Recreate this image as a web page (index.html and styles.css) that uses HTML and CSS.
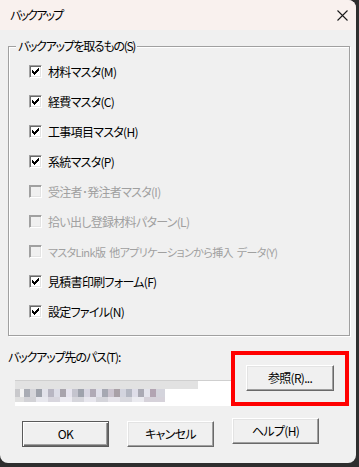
FILE: index.html
```html
<!DOCTYPE html>
<html lang="ja">
<head>
<meta charset="utf-8">
<title>バックアップ</title>
<link rel="stylesheet" href="styles.css">
</head>
<body>
<div class="window">
  <div class="titlebar">
    <span class="title">バックアップ</span>
    <span class="close">
      <svg width="11" height="11" viewBox="0 0 11 11"><path d="M0.5 0.5L10.5 10.5M10.5 0.5L0.5 10.5" stroke="#1a1a1a" stroke-width="1.1" fill="none"/></svg>
    </span>
  </div>
  <div class="content">
    <div class="group">
      <span class="legend">バックアップを取るもの(S)</span>
      <div class="rows">
        <div class="row"><span class="cb checked"><svg class="check" width="7" height="7" viewBox="0 0 7 7"><path d="M0 2h1v3h-1zM1 3h1v3h-1zM2 4h1v3h-1zM3 3h1v3h-1zM4 2h1v3h-1zM5 1h1v3h-1zM6 0h1v3h-1z" fill="#000"/></svg></span><span class="text">材料マスタ(M)</span></div>
        <div class="row"><span class="cb checked"><svg class="check" width="7" height="7" viewBox="0 0 7 7"><path d="M0 2h1v3h-1zM1 3h1v3h-1zM2 4h1v3h-1zM3 3h1v3h-1zM4 2h1v3h-1zM5 1h1v3h-1zM6 0h1v3h-1z" fill="#000"/></svg></span><span class="text">経費マスタ(C)</span></div>
        <div class="row"><span class="cb checked"><svg class="check" width="7" height="7" viewBox="0 0 7 7"><path d="M0 2h1v3h-1zM1 3h1v3h-1zM2 4h1v3h-1zM3 3h1v3h-1zM4 2h1v3h-1zM5 1h1v3h-1zM6 0h1v3h-1z" fill="#000"/></svg></span><span class="text">工事項目マスタ(H)</span></div>
        <div class="row"><span class="cb checked"><svg class="check" width="7" height="7" viewBox="0 0 7 7"><path d="M0 2h1v3h-1zM1 3h1v3h-1zM2 4h1v3h-1zM3 3h1v3h-1zM4 2h1v3h-1zM5 1h1v3h-1zM6 0h1v3h-1z" fill="#000"/></svg></span><span class="text">系統マスタ(P)</span></div>
        <div class="row disabled"><span class="cb"></span><span class="text">受注者･発注者マスタ(I)</span></div>
        <div class="row disabled"><span class="cb"></span><span class="text">拾い出し登録材料パターン(L)</span></div>
        <div class="row disabled"><span class="cb"></span><span class="text tight">マスタLink版 他アプリケーションから挿入 データ(Y)</span></div>
        <div class="row"><span class="cb checked"><svg class="check" width="7" height="7" viewBox="0 0 7 7"><path d="M0 2h1v3h-1zM1 3h1v3h-1zM2 4h1v3h-1zM3 3h1v3h-1zM4 2h1v3h-1zM5 1h1v3h-1zM6 0h1v3h-1z" fill="#000"/></svg></span><span class="text">見積書印刷フォーム(F)</span></div>
        <div class="row"><span class="cb checked"><svg class="check" width="7" height="7" viewBox="0 0 7 7"><path d="M0 2h1v3h-1zM1 3h1v3h-1zM2 4h1v3h-1zM3 3h1v3h-1zM4 2h1v3h-1zM5 1h1v3h-1zM6 0h1v3h-1z" fill="#000"/></svg></span><span class="text">設定ファイル(N)</span></div>
      </div>
    </div>
    <div class="path-section">
      <div class="path-col">
        <div class="path-label">バックアップ先のパス(T):</div>
        <div class="path-field">
          <div class="blur-top"></div>
          <div class="blur-mid"></div>
          <div class="blur-low"></div>
        </div>
      </div>
      <div class="highlight">
        <div class="btn">参照(R)...</div>
      </div>
    </div>
    <div class="buttons">
      <div class="btn default low">OK</div>
      <div class="btn low">キャンセル</div>
      <div class="btn">ヘルプ(H)</div>
    </div>
  </div>
</div>
</body>
</html>
```

FILE: styles.css
```css
* { box-sizing: border-box; }

html, body {
  margin: 0;
  padding: 0;
}

body {
  width: 359px;
  height: 467px;
  background: #2e2e2e;
  font-family: "Noto Sans CJK JP", "Noto Sans", sans-serif;
  font-size: 12px;
  font-feature-settings: "palt";
  letter-spacing: -0.7px;
  color: #000;
  overflow: hidden;
}

.window {
  width: 356px;
  height: 463px;
  background: #f0f0f0;
  border-radius: 0 8px 8px 8px;
  overflow: hidden;
}

.titlebar {
  height: 30px;
  background: #f9f1ee;
  display: flex;
  align-items: center;
  justify-content: space-between;
  padding: 0 8px 0 10px;
}

.title {
  line-height: 16px;
  letter-spacing: -1.8px;
}

.close {
  display: flex;
  width: 11px;
  height: 11px;
}

.content {
  padding-left: 8px;
  display: flex;
  flex-direction: column;
}

.group {
  position: relative;
  margin-top: 16px;
  width: 342px;
  height: 290px;
  border: 1px solid #a0a0a0;
  box-shadow: inset 1px 1px 0 #ffffff, 1px 1px 0 #ffffff;
}

.legend {
  position: absolute;
  top: -9px;
  left: 7px;
  padding: 0 2px;
  background: #f0f0f0;
  line-height: 16px;
  letter-spacing: -1.3px;
  white-space: nowrap;
}

.rows {
  padding: 10px 0 0 20px;
  display: flex;
  flex-direction: column;
}

.row {
  height: 30px;
  display: flex;
  align-items: center;
  gap: 6px;
  white-space: pre;
}

.row .text {
  line-height: 16px;
}

.row .text.tight {
  font-size: 11px;
  letter-spacing: -0.6px;
  word-spacing: 2px;
}

.row.disabled .text {
  color: #a0a0a0;
}

.cb {
  width: 13px;
  height: 13px;
  flex: none;
  border: 1px solid;
  border-color: #a0a0a0 #ffffff #ffffff #a0a0a0;
  box-shadow: inset 1px 1px 0 #696969, inset -1px -1px 0 #e3e3e3;
  background: #ffffff;
  display: flex;
  align-items: center;
  justify-content: center;
  margin-top: -1px;
}

.row.disabled .cb {
  background: #f0f0f0;
  box-shadow: inset 1px 1px 0 #a0a0a0, inset -1px -1px 0 #e3e3e3;
}

.check {
  display: block;
  shape-rendering: crispEdges;
}

.path-section {
  display: flex;
  align-items: flex-start;
}

.path-col {
  width: 223px;
  margin-top: 13px;
  display: flex;
  flex-direction: column;
}

.path-label {
  line-height: 16px;
  letter-spacing: -1.1px;
  white-space: nowrap;
}

.path-field {
  margin: 15px 0 0 7px;
  width: 216px;
  height: 26px;
  background: #ffffff;
  border-top: 1px solid #cfcfcf;
  display: flex;
  flex-direction: column;
}

.blur-top {
  width: 183px;
  height: 8px;
  background: #e2e2e2;
}

.blur-mid {
  width: 150px;
  height: 8px;
  background: linear-gradient(90deg,
    #c9c9cc 0 5px, #f2f2f2 5px 9px, #a9acb4 9px 15px, #d5d5da 15px 21px,
    #9ea2ab 21px 27px, #e2e2ea 27px 33px, #b8b6c2 33px 39px, #dcdce6 39px 45px,
    #a8a4ac 45px 51px, #e6e4ee 51px 57px, #c4c4ce 57px 63px, #9fa3ad 63px 69px,
    #d8d6e2 69px 75px, #b0aab6 75px 81px, #e0e0ea 81px 87px, #a6a8b2 87px 93px,
    #cbc4cf 93px 99px, #a9a1a7 99px 105px, #d3d4de 105px 111px, #b4b7c2 111px 117px,
    #dedde8 117px 123px, #aaaab4 123px 129px, #e4e4ec 129px 135px, #b2a4b2 135px 141px,
    #d4d4dc 141px 150px);
}

.blur-low {
  width: 150px;
  height: 5px;
  background: linear-gradient(90deg,
    #e0e0e0 0 9px, #d2d2d6 9px 21px, #e8e8ee 21px 33px, #d8d6de 33px 45px,
    #ecebf1 45px 57px, #d6d6dc 57px 69px, #e8e7ee 69px 81px, #d5d5db 81px 93px,
    #e6e4ea 93px 105px, #d9d9df 105px 117px, #ebebf0 117px 129px, #d6d2da 129px 150px);
}

.highlight {
  margin-top: 15px;
  width: 118px;
  height: 55px;
  border: 4px solid #ff0000;
  padding: 10px 11px 0 11px;
}

.btn {
  width: 88px;
  height: 26px;
  background: #f0f0f0;
  border: 1px solid;
  border-color: #ffffff #696969 #696969 #ffffff;
  box-shadow: inset -1px -1px 0 #a0a0a0, inset 1px 1px 0 #e3e3e3;
  display: flex;
  align-items: center;
  justify-content: center;
  line-height: 16px;
  white-space: nowrap;
}

.btn.default {
  border: 1px solid #5a5a5a;
  box-shadow: inset 1px 1px 0 #ffffff, inset -1px -1px 0 #696969, inset -2px -2px 0 #a0a0a0;
}

.buttons {
  display: flex;
  align-items: flex-start;
  gap: 18px;
  margin: 12px 0 0 14px;
}

.buttons .btn {
  width: 87px;
}

.buttons .btn.low {
  margin-top: 3px;
}
```
